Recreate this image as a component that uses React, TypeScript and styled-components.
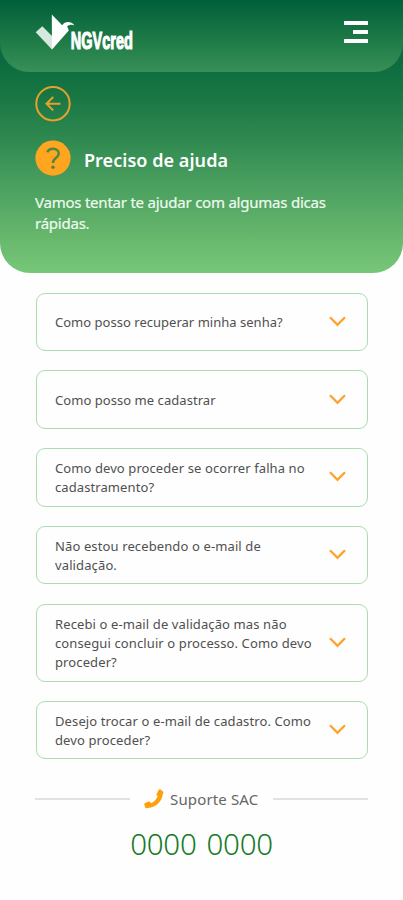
import React, { useState } from 'react';
import styled, { createGlobalStyle } from 'styled-components';

const GlobalStyle = createGlobalStyle`
  * { box-sizing: border-box; }
  body {
    margin: 0;
    background: #fefefe;
    font-family: "Noto Sans", "Open Sans", sans-serif;
  }
  button { font-family: inherit; }
`;

const Page = styled.main`
  width: 403px;
  height: 900px;
  overflow: hidden;
  background: #fefefe;
`;

const Hero = styled.header`
  height: 273px;
  border-radius: 0 0 30px 30px;
  background: linear-gradient(180deg, #00623a 0, #0b6b3e 60px, #177543 92px, #2f8950 140px, #4ba060 186px, #64b56b 232px, #78c779 273px);
`;

const TopBar = styled.div`
  height: 72px;
  padding: 0 35px;
  display: flex;
  justify-content: space-between;
  align-items: flex-start;
  border-radius: 0 0 29px 29px;
  background: linear-gradient(180deg, #00603a 0, #0c693e 15px, #1f7c47 42px, #398f58 72px);
`;

const Logo = styled.svg`
  display: block;
  margin-top: 12px;
  overflow: visible;
`;

const MenuButton = styled.button`
  margin: 21px 0 0;
  padding: 0;
  width: 24px;
  height: 22px;
  display: flex;
  flex-direction: column;
  justify-content: space-between;
  align-items: flex-end;
  border: 0;
  background: none;
`;

const MenuLine = styled.span<{ $width: number }>`
  width: ${(p) => p.$width}px;
  height: 4px;
  border-radius: 0.5px;
  background: #fff;
`;

const HeroBody = styled.div`
  padding: 13px 35px 0;
`;

const BackButton = styled.button`
  display: block;
  padding: 0;
  width: 36px;
  height: 37px;
  border: 0;
  background: none;
`;

const TitleRow = styled.div`
  display: flex;
  align-items: center;
  gap: 13px;
  height: 38px;
  margin-top: 17px;
`;

const Title = styled.h1`
  margin: 3px 0 0;
  color: #fff;
  font-size: 18px;
  font-weight: 600;
  line-height: 26px;
  letter-spacing: 0.05px;
  white-space: nowrap;
`;

const Intro = styled.p`
  margin: 15px 0 0;
  color: #effaf0;
  font-size: 15px;
  line-height: 21px;
  letter-spacing: -0.23px;
  white-space: nowrap;
  -webkit-text-stroke: 0.2px #effaf0;
`;

const Line = styled.span`
  display: block;
`;

const Questions = styled.section`
  display: flex;
  flex-direction: column;
  gap: 19.3px;
  padding: 19.5px 35px 0 35.5px;
`;

const Question = styled.button<{ $height: number; $spacing: number }>`
  display: flex;
  justify-content: space-between;
  align-items: center;
  width: 100%;
  height: ${(p) => p.$height}px;
  padding: 0 21px 0 18.5px;
  border: 1px solid #aedcae;
  border-radius: 9px;
  background: #fefefe;
  color: #505050;
  font-size: 13px;
  line-height: 18.7px;
  letter-spacing: ${(p) => p.$spacing}px;
  text-align: left;
  white-space: nowrap;
`;

const QuestionText = styled.span`
  padding-top: 1px;
`;

const Chevron = styled.svg<{ $open: boolean }>`
  flex: none;
  margin-top: -1px;
  transform: ${(p) => (p.$open ? 'rotate(180deg)' : 'none')};
`;

const Support = styled.footer`
  padding: 0 35px;
  margin-top: 27px;
`;

const SupportLabel = styled.div`
  display: flex;
  align-items: center;
  height: 26px;
  color: #666;
  font-size: 15px;
  letter-spacing: 0.15px;
  white-space: nowrap;
`;

const Rule = styled.span`
  flex: 1;
  height: 2px;
  background: #e2e2e2;
`;

const SupportName = styled.span`
  display: flex;
  align-items: center;
  gap: 6px;
  width: 143px;
  padding-left: 14px;
`;

const Phone = styled.div`
  margin-top: 11px;
  color: #187a27;
  font-size: 29.5px;
  font-weight: 300;
  line-height: 42px;
  letter-spacing: -0.25px;
  word-spacing: 2.5px;
  text-align: center;
`;

const questions = [
  { height: 58.5, spacing: 0.02, lines: ['Como posso recuperar minha senha?'] },
  { height: 58.5, spacing: 0.05, lines: ['Como posso me cadastrar'] },
  { height: 58.5, spacing: 0.09, lines: ['Como devo proceder se ocorrer falha no', 'cadastramento?'] },
  { height: 58.5, spacing: 0.12, lines: ['Não estou recebendo o e-mail de', 'validação.'] },
  { height: 78, spacing: 0.11, lines: ['Recebi o e-mail de validação mas não', 'consegui concluir o processo. Como devo', 'proceder?'] },
  { height: 58.5, spacing: 0.11, lines: ['Desejo trocar o e-mail de cadastro. Como', 'devo proceder?'] },
];

function BrandLogo() {
  return (
    <Logo width="100" height="42" viewBox="0 0 100 42" role="img" aria-label="NGVcred">
      <path d="M0.7 20.2 7.3 14.2 17 24V37.5Z" fill="#d6e9df" />
      <path d="M16.8 2.4 27.2 13.2C30.2 9.3 35.7 8.8 39.5 13.4 36.8 12.3 34.2 12.7 32.2 14.3L33.8 18.6 17 37.5Z" fill="#fff" />
      <text x="35.8" y="37.2" fill="#fff" stroke="#fff" strokeWidth="1.2" fontFamily="Liberation Sans, sans-serif" fontWeight="700" fontSize="24" textLength="62" lengthAdjust="spacingAndGlyphs">NGVcred</text>
    </Logo>
  );
}

function BackIcon() {
  return (
    <svg width="36" height="37" viewBox="0 0 36 37" fill="none" stroke="#e5a12b">
      <circle cx="18" cy="18.7" r="16.7" strokeWidth="2" />
      <path d="M25.5 18.7H11.5M18.2 12 11.5 18.7 18.2 25.4" strokeWidth="2" />
    </svg>
  );
}

function HelpIcon() {
  return (
    <svg width="36" height="38" viewBox="0 0 36 38">
      <circle cx="18" cy="19.1" r="17.6" fill="#ffa51f" />
      <path d="M12.3 13.3C13.4 10.7 15.2 9.8 18 9.8 21.5 9.8 23.8 11.7 23.8 14.6 23.8 19 18 18.4 18 24" fill="none" stroke="#4b8843" strokeWidth="2.5" />
      <circle cx="18" cy="28.2" r="1.7" fill="#4b8843" />
    </svg>
  );
}

function PhoneIcon() {
  return (
    <svg width="20" height="20" viewBox="0 0 20 20" fill="#ff9f0c">
      <path d="M14.7.7Q15.6-.2 16.5.5L19 2.4Q19.8 3.1 19.3 4L18.7 5.2C18.1 12 12.4 18 5.2 18.8L2.5 19.2Q1.6 19.3 1.2 18.4L.3 15.4Q.1 14.5 1 14.1L4.7 12.5Q5.6 12.2 6.1 12.9L7.2 14.2C10 12.8 12.3 10.4 13.7 7.5L12.8 6.4Q12.2 5.6 12.8 4.7Z" />
    </svg>
  );
}

export default function App() {
  const [active, setActive] = useState<number | null>(null);
  return (
    <Page>
      <GlobalStyle />
      <Hero>
        <TopBar>
          <BrandLogo />
          <MenuButton aria-label="Menu">
            <MenuLine $width={24} />
            <MenuLine $width={15} />
            <MenuLine $width={24} />
          </MenuButton>
        </TopBar>
        <HeroBody>
          <BackButton aria-label="Voltar"><BackIcon /></BackButton>
          <TitleRow>
            <HelpIcon />
            <Title>Preciso de ajuda</Title>
          </TitleRow>
          <Intro>
            <Line>Vamos tentar te ajudar com algumas dicas</Line>
            <Line>rápidas.</Line>
          </Intro>
        </HeroBody>
      </Hero>
      <Questions>
        {questions.map((question, index) => (
          <Question
            key={question.lines[0]}
            $height={question.height}
            $spacing={question.spacing}
            aria-pressed={active === index}
            onClick={() => setActive(active === index ? null : index)}
          >
            <QuestionText>
              {question.lines.map((line) => <Line key={line}>{line}</Line>)}
            </QuestionText>
            <Chevron $open={active === index} width="17" height="11" viewBox="0 0 17 11" fill="none" stroke="#ffa22b" strokeWidth="2.3">
              <path d="M1 1.3 8.5 8.8 16 1.3" />
            </Chevron>
          </Question>
        ))}
      </Questions>
      <Support>
        <SupportLabel>
          <Rule />
          <SupportName><PhoneIcon />Suporte SAC</SupportName>
          <Rule />
        </SupportLabel>
        <Phone>0000 0000</Phone>
      </Support>
    </Page>
  );
}
